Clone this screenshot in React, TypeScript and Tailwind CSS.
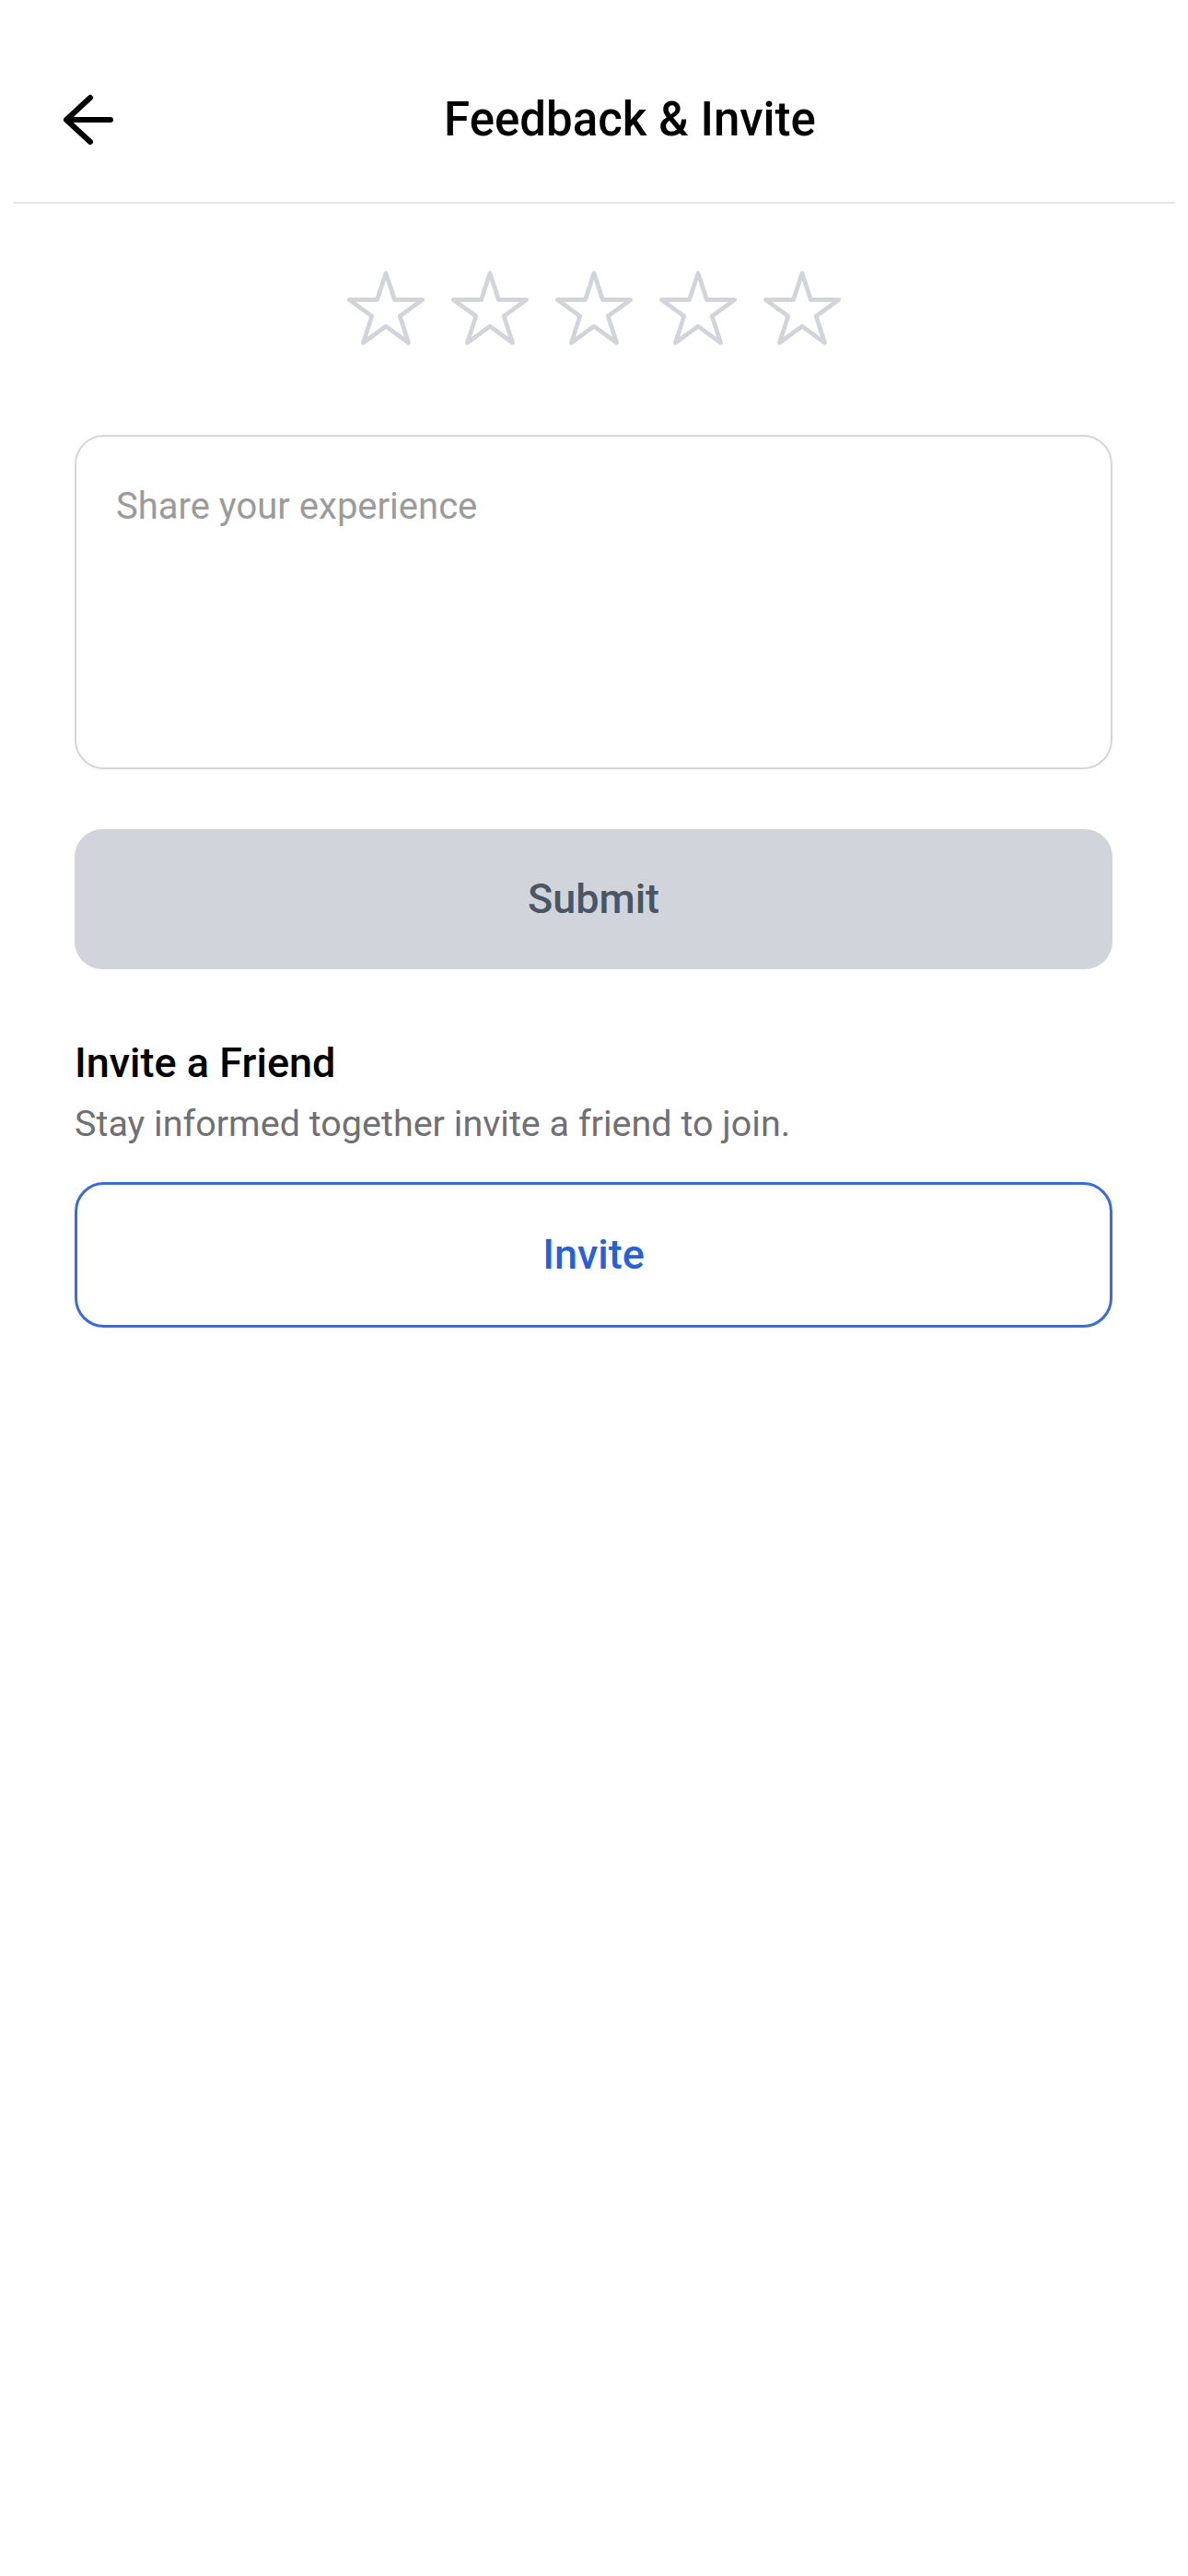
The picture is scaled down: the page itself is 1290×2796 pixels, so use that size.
import { useState } from 'react'

const starPoints =
  '42,3 50.76,29.95 79.09,29.95 56.17,46.6 64.92,73.55 42,56.9 19.08,73.55 27.83,46.6 4.91,29.95 33.24,29.95'

function Star({ filled, onClick }: { filled: boolean; onClick: () => void }) {
  return (
    <button type="button" onClick={onClick} className="block">
      <svg width="90" height="84" viewBox="0 0 84 78" className="block">
        <polygon
          points={starPoints}
          fill={filled ? '#facc15' : 'none'}
          stroke={filled ? '#facc15' : '#d1d5db'}
          strokeWidth="4.4"
          strokeLinejoin="round"
        />
      </svg>
    </button>
  )
}

export default function App() {
  const [rating, setRating] = useState(0)
  const [text, setText] = useState('')

  return (
    <div className="min-h-screen bg-white font-['Roboto','Liberation_Sans',sans-serif]">
      {/* Header */}
      <header className="h-[219px] pt-[40px] flex items-center pl-[66px] pr-[48px]">
        <button type="button" className="block">
          <svg width="60" height="56" viewBox="0 0 60 56" fill="none" className="block">
            <path d="M32 4 L6 28 L32 52 M6 28 H54" stroke="#000" strokeWidth="6" strokeLinecap="round" strokeLinejoin="round" />
          </svg>
        </button>
        <h1 className="flex-1 text-center text-[51px] leading-[60px] font-medium text-black">Feedback &amp; Invite</h1>
      </header>
      <div className="mx-[14px] h-[2px] bg-[#e5e7eb]" />

      <main className="pl-[81px] pr-[82px]">
        {/* Rating */}
        <div className="mt-[72px] flex justify-center gap-[23px]">
          {[1, 2, 3, 4, 5].map(n => (
            <Star key={n} filled={n <= rating} onClick={() => setRating(n)} />
          ))}
        </div>

        {/* Feedback */}
        <textarea
          value={text}
          onChange={e => setText(e.target.value)}
          placeholder="Share your experience"
          className="mt-[95px] block w-full h-[363px] resize-none rounded-[32px] border-2 border-[#d6d6d8] pt-[52px] pl-[43px] pr-[43px] text-[40px] leading-[48px] text-gray-900 placeholder:text-[#9b9b9b] focus:outline-none"
        />

        <button
          type="button"
          className="mt-[65px] w-full h-[152px] rounded-[30px] bg-[#d1d5db] text-[45px] font-medium text-[#4b5563]"
        >
          Submit
        </button>

        {/* Invite */}
        <h2 className="mt-[75px] text-[45px] leading-[54px] font-medium text-black">Invite a Friend</h2>
        <p className="mt-[15px] text-[39.5px] leading-[47px] text-[#707074]">Stay informed together invite a friend to join.</p>

        <button
          type="button"
          className="mt-[40px] w-full h-[158px] rounded-[32px] border-[3px] border-[#3a6bd6] bg-white text-[45px] font-medium text-[#2a5fd6]"
        >
          Invite
        </button>
      </main>
    </div>
  )
}
